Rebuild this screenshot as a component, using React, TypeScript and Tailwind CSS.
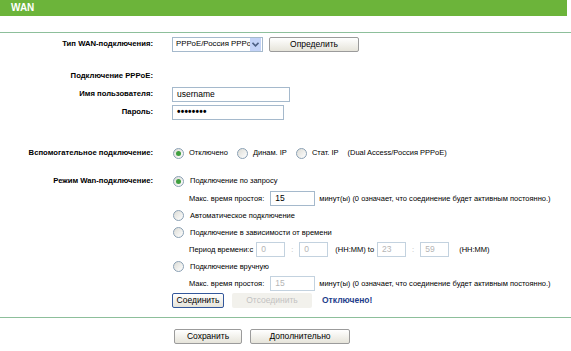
import React from 'react';

// Small XP-style widgets used by the router page

function Radio({ checked = false }: { checked?: boolean }) {
  return (
    <span className="flex h-[11px] w-[11px] shrink-0 items-center justify-center rounded-full border border-[#8aa0b4] bg-gradient-to-br from-[#dcdcd6] to-white">
      {checked && <span className="h-[5px] w-[5px] rounded-full bg-[#3f9f3f]" />}
    </span>
  );
}

function TextBox({ value, width, disabled = false, password = false }: { value: string; width: string; disabled?: boolean; password?: boolean }) {
  return (
    <div
      className={`flex h-[15px] shrink-0 items-center whitespace-nowrap border px-[4px] ${width} ${
        disabled ? 'border-[#c3d2df] text-[#b5b5b5]' : 'border-[#a5b9cc] text-black'
      } ${password ? 'text-[10px] font-bold tracking-[0.2px]' : 'text-[8.5px]'}`}
    >
      {value}
    </div>
  );
}

function Btn({ children, width, focused = false, disabled = false }: { children: React.ReactNode; width: string; focused?: boolean; disabled?: boolean }) {
  return (
    <div
      className={`flex h-[15px] shrink-0 items-center justify-center whitespace-nowrap rounded-[2px] text-[8.5px] ${width} ${
        disabled
          ? 'bg-[#f2f1ec] text-[#c2c2c2]'
          : focused
            ? 'border border-[#33579b] bg-gradient-to-b from-white to-[#e6e4da] text-black'
            : 'border border-[#9b9b9b] bg-gradient-to-b from-white to-[#e6e4da] text-black'
      }`}
    >
      {children}
    </div>
  );
}

function Row({ label, h = 'h-[17px]', children }: { label?: string; h?: string; children?: React.ReactNode }) {
  return (
    <div className={`flex items-center whitespace-nowrap ${h}`}>
      <div className="w-[153px] shrink-0 text-right text-[7.7px] font-bold">{label}</div>
      <div className="ml-[19px] flex items-center whitespace-nowrap">{children}</div>
    </div>
  );
}

export default function App() {
  return (
    <div className="h-[351px] w-[571px] overflow-hidden bg-white font-['Liberation_Sans',Arial,sans-serif] text-[7.5px] leading-none text-black">
      <div className="mr-[4px] flex h-[16px] items-center bg-[#6cb43a] pl-[11px] text-[10px] font-bold text-white">WAN</div>
      <div className="mt-[16px] h-px bg-[#8dbf9b]" />

      <div className="pt-[2px]">
        <Row label="Тип WAN-подключения:" h="h-[18px]">
          <div className="flex h-[15px] w-[91px] items-center overflow-hidden border border-[#a5b9cc] text-[7.8px]">
            <div className="min-w-0 flex-1 whitespace-nowrap pl-[3px]">PPPoE/Россия PPPoE</div>
            <div className="mr-px flex h-[13px] w-[11px] shrink-0 items-center justify-center bg-[#c3d3f7]">
              <svg width="7" height="5" viewBox="0 0 7 5">
                <path d="M0.5 0.8 L3.5 3.8 L6.5 0.8" stroke="#4d6185" strokeWidth="1.6" fill="none" />
              </svg>
            </div>
          </div>
          <Btn width="w-[90px] ml-[6px]">Определить</Btn>
        </Row>

        <div className="h-[14px]" />
        <Row label="Подключение PPPoE:" h="h-[18px]" />
        <Row label="Имя пользователя:" h="h-[18px]">
          <TextBox value="username" width="w-[118px]" />
        </Row>
        <Row label="Пароль:" h="h-[18px]">
          <TextBox value="••••••••" width="w-[112px]" password />
        </Row>

        <div className="h-[23px]" />
        <Row label="Вспомогательное подключение:" h="h-[18px]">
          <span className="ml-[1px] flex items-center gap-[5px]">
            <Radio checked />
            Отключено
          </span>
          <span className="ml-[9px] flex items-center gap-[5px]">
            <Radio />
            Динам. IP
          </span>
          <span className="ml-[9px] flex items-center gap-[5px]">
            <Radio />
            Стат. IP
          </span>
          <span className="ml-[9px]">(Dual Access/Россия PPPoE)</span>
        </Row>

        <div className="h-[10px]" />
        <Row label="Режим Wan-подключение:" h="h-[18px]">
          <span className="ml-[1px] flex items-center gap-[6px]">
            <Radio checked />
            Подключение по запросу
          </span>
        </Row>
        <Row>
          <span className="ml-[17px]">Макс. время простоя:</span>
          <TextBox value="15" width="w-[45px] ml-[6px]" />
          <span className="ml-[4px]">минут(ы) (0 означает, что соединение будет активным постоянно.)</span>
        </Row>
        <Row>
          <span className="ml-[1px] flex items-center gap-[6px]">
            <Radio />
            Автоматическое подключение
          </span>
        </Row>
        <Row>
          <span className="ml-[1px] flex items-center gap-[6px]">
            <Radio />
            Подключение в зависимости от времени
          </span>
        </Row>
        <Row>
          <span className="ml-[17px]">Период времени:с</span>
          <TextBox value="0" width="w-[29px] ml-[3px]" disabled />
          <span className="mx-[6px] text-[#b5b5b5]">:</span>
          <TextBox value="0" width="w-[29px]" disabled />
          <span className="ml-[7px]">(HH:MM) to</span>
          <TextBox value="23" width="w-[29px] ml-[3px]" disabled />
          <span className="mx-[6px] text-[#b5b5b5]">:</span>
          <TextBox value="59" width="w-[29px]" disabled />
          <span className="ml-[10px]">(HH:MM)</span>
        </Row>
        <Row>
          <span className="ml-[1px] flex items-center gap-[6px]">
            <Radio />
            Подключение вручную
          </span>
        </Row>
        <Row>
          <span className="ml-[17px]">Макс. время простоя:</span>
          <TextBox value="15" width="w-[45px] ml-[6px]" disabled />
          <span className="ml-[4px]">минут(ы) (0 означает, что соединение будет активным постоянно.)</span>
        </Row>
        <Row>
          <Btn width="w-[52px]" focused>
            Соединить
          </Btn>
          <Btn width="w-[80px] ml-[8px]" disabled>
            Отсоединить
          </Btn>
          <span className="ml-[10px] text-[8.5px] font-bold text-[#1f3e8c]">Отключено!</span>
        </Row>
      </div>

      <div className="mt-[8px] h-px bg-[#8dbf9b]" />
      <div className="mt-[11px] flex pl-[174px]">
        <Btn width="w-[68px]">Сохранить</Btn>
        <Btn width="w-[100px] ml-[8px]">Дополнительно</Btn>
      </div>
    </div>
  );
}
